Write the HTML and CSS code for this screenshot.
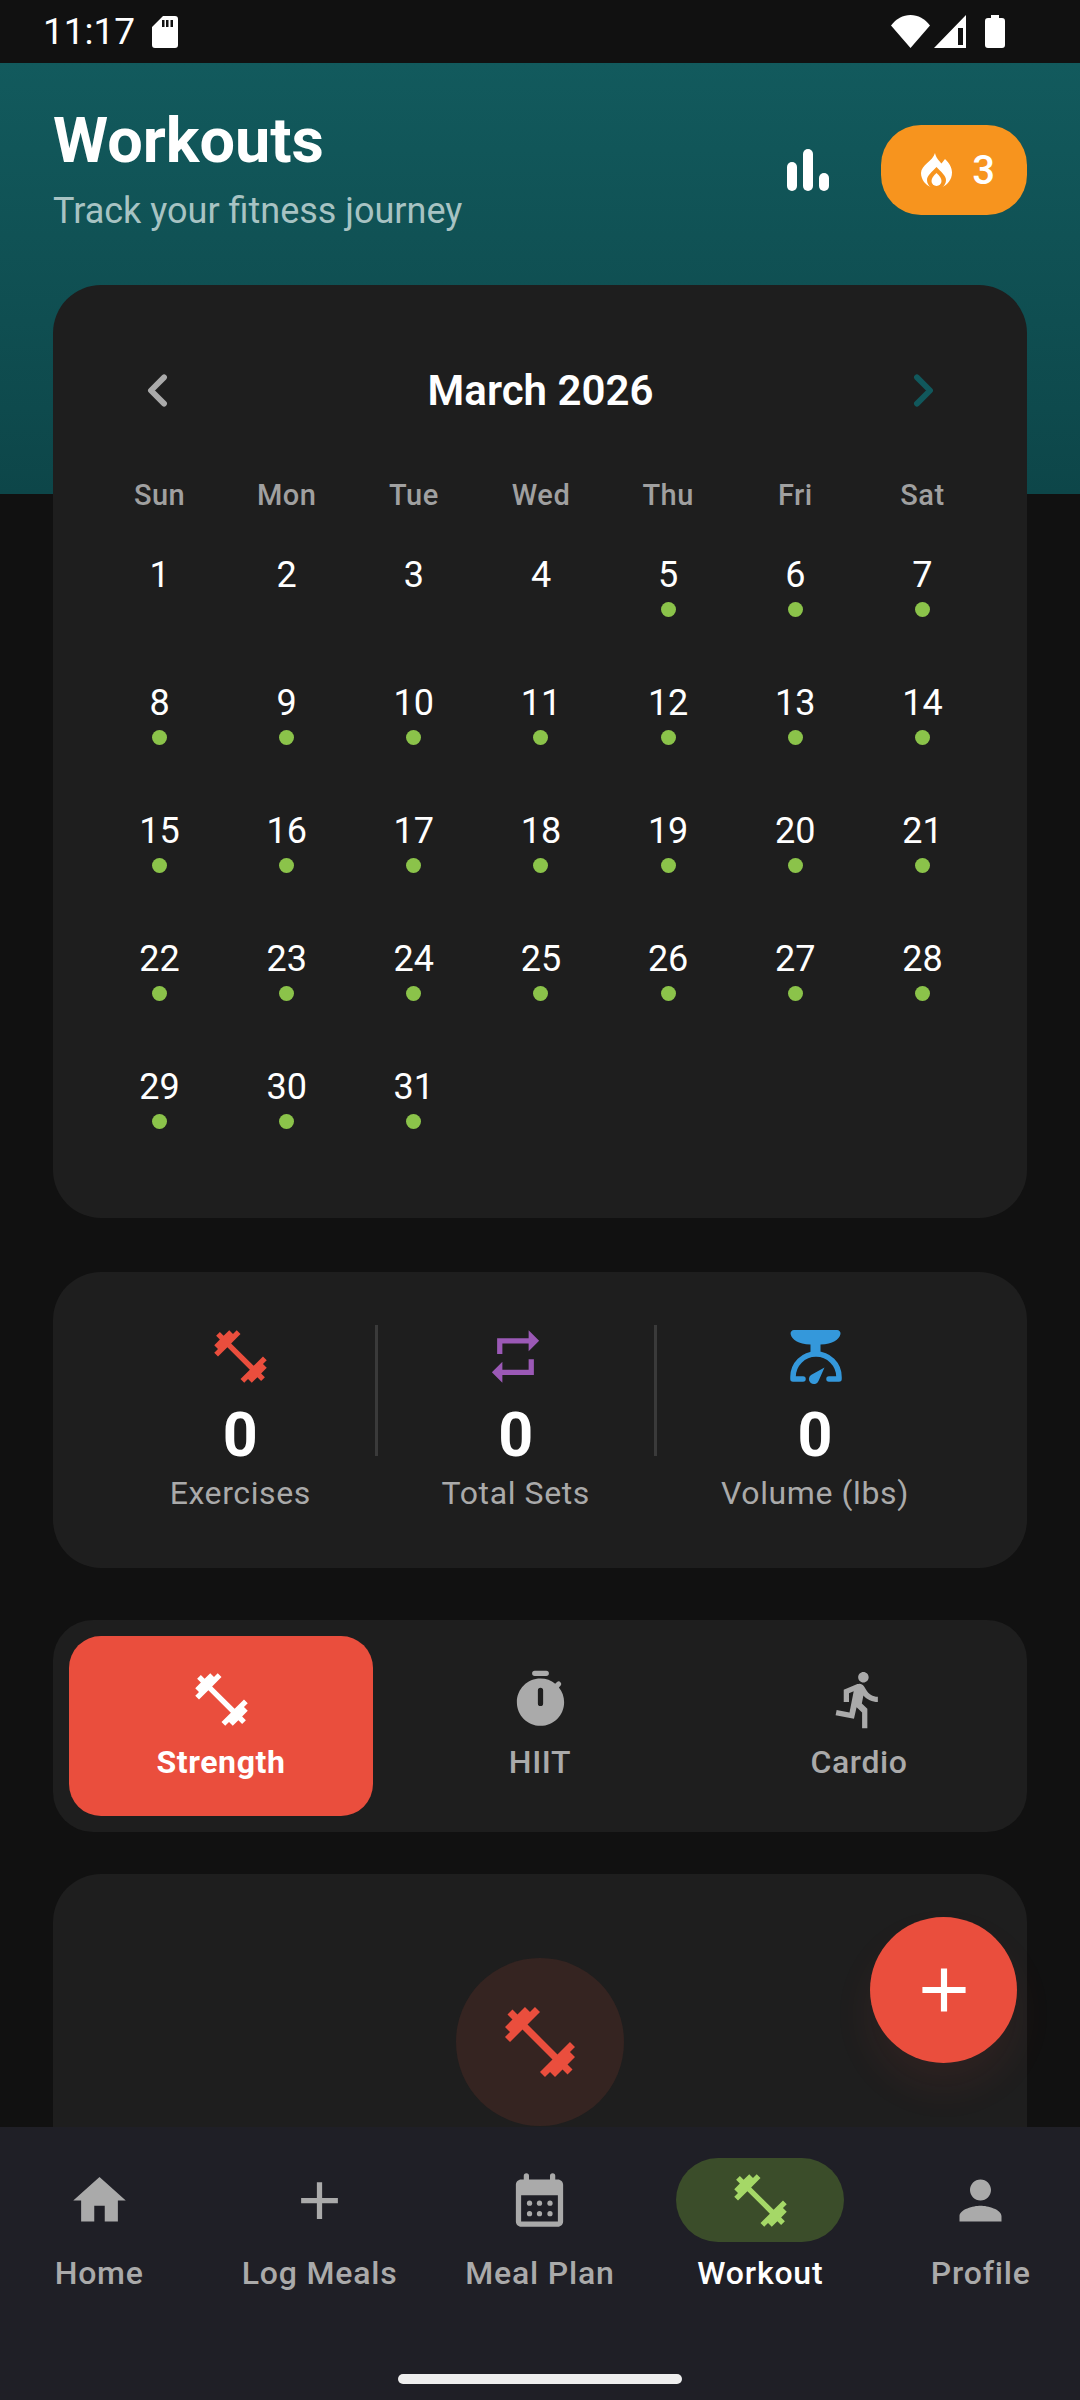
FILE: index.html
```html
<!DOCTYPE html>
<html lang="en">
<head>
  <meta charset="UTF-8">
  <meta name="viewport" content="width=device-width, initial-scale=1.0">
  <title>Workouts</title>
  <link rel="stylesheet" href="styles.css">
</head>
<body>
<div class="app">
  <div class="status-bar">
    <div class="status-left">
      <span class="clock">11:17</span>
      <svg class="sd-icon" viewBox="0 0 26 32"><path fill="#fff" fill-rule="evenodd" d="M11 0h12a3 3 0 0 1 3 3v26a3 3 0 0 1-3 3H3a3 3 0 0 1-3-3V11zM14 4v7h2.5V4zm4.5 0v7H21V4zM10 4v7h2.5V4z"/></svg>
    </div>
    <div class="status-right">
      <svg class="wifi-icon" viewBox="0 0 39 33"><path fill="#fff" d="M0 10.500C5 4 12 0 19.500 0S34 4 39 10.500L19.500 33z"/></svg>
      <svg class="signal-icon" viewBox="0 0 32 33"><path fill="#fff" fill-rule="evenodd" d="M32 0v33H0zM24 13v17h5V13z"/></svg>
      <svg class="battery-icon" viewBox="0 0 20 33"><path fill="#fff" d="M6 0h8v3h3a3 3 0 0 1 3 3v24a3 3 0 0 1-3 3H3a3 3 0 0 1-3-3V6a3 3 0 0 1 3-3h3z"/></svg>
    </div>
  </div>

  <div class="main">
    <header class="top">
      <div>
        <h1>Workouts</h1>
        <p class="subtitle">Track your fitness journey</p>
      </div>
      <div class="top-actions">
        <div class="bars"><span class="bar-a"></span><span class="bar-b"></span><span class="bar-c"></span></div>
        <div class="streak">
          <svg class="flame" viewBox="0 0 31 34">
            <path fill="#fff" d="M14 0c1 5 4 7.500 6.500 10.500L24 6c4 3.500 7 8.500 7 13.500C31 27 26 32 21.500 34c2-1.500 3.500-4 3.500-7 0-4.500-5-8-9.500-13-4.500 5-9.500 8.500-9.500 13 0 3 1.500 5.500 3.500 7C5 32 0 27 0 20 0 12 12 8 14 0z"/>
            <path fill="#fff" d="M15.500 20c3 3 5 5 5 8a5 5 0 0 1-10 0c0-3 2-5 5-8z"/>
          </svg>
          <span>3</span>
        </div>
      </div>
    </header>

    <section class="card calendar">
      <div class="cal-head">
        <svg class="icon" viewBox="0 0 24 24"><path class="chev chev-prev" d="M14.500 7l-5 5 5 5"/></svg>
        <h2>March 2026</h2>
        <svg class="icon" viewBox="0 0 24 24"><path class="chev chev-next" d="M9.500 7l5 5-5 5"/></svg>
      </div>
      <div class="weekdays">
        <span>Sun</span><span>Mon</span><span>Tue</span><span>Wed</span><span>Thu</span><span>Fri</span><span>Sat</span>
      </div>
      <div class="days">
        <div class="day">1</div>
        <div class="day">2</div>
        <div class="day">3</div>
        <div class="day">4</div>
        <div class="day done">5</div>
        <div class="day done">6</div>
        <div class="day done">7</div>
        <div class="day done">8</div>
        <div class="day done">9</div>
        <div class="day done">10</div>
        <div class="day done">11</div>
        <div class="day done">12</div>
        <div class="day done">13</div>
        <div class="day done">14</div>
        <div class="day done">15</div>
        <div class="day done">16</div>
        <div class="day done">17</div>
        <div class="day done">18</div>
        <div class="day done">19</div>
        <div class="day done">20</div>
        <div class="day done">21</div>
        <div class="day done">22</div>
        <div class="day done">23</div>
        <div class="day done">24</div>
        <div class="day done">25</div>
        <div class="day done">26</div>
        <div class="day done">27</div>
        <div class="day done">28</div>
        <div class="day done">29</div>
        <div class="day done">30</div>
        <div class="day done">31</div>
      </div>
    </section>

    <section class="card stats">
      <div class="stat stat-exercises">
        <svg class="icon red" viewBox="0 0 24 24"><path d="M20.570 14.860L22 13.430 20.570 12 17 15.570 8.430 7 12 3.430 10.570 2 9.140 3.430 7.710 2 5.570 4.140 4.140 2.710 2.710 4.140l1.430 1.430L2 7.710l1.430 1.430L2 10.570 3.430 12 7 8.430 15.570 17 12 20.570 13.430 22l1.430-1.430L16.290 22l2.140-2.140 1.430 1.430 1.430-1.430-1.430-1.430L22 16.290z"/></svg>
        <div class="stat-value">0</div>
        <div class="stat-label">Exercises</div>
      </div>
      <div class="divider"></div>
      <div class="stat stat-sets">
        <svg class="icon purple" viewBox="0 0 24 24"><path d="M7 7h10v3l4-4-4-4v3H5v6h2V7zm10 10H7v-3l-4 4 4 4v-3h12v-6h-2v4z"/></svg>
        <div class="stat-value">0</div>
        <div class="stat-label">Total Sets</div>
      </div>
      <div class="divider"></div>
      <div class="stat stat-volume">
        <svg class="icon blue" viewBox="14 5 63 63">
          <path d="M24 10h43a3.500 3.500 0 0 1 3.500 4c-1.500 6-7.500 10-20 10.500V35h-10V24.500C28 24 22 20 20.600 14a3.500 3.500 0 0 1 3.400-4z"/>
          <path class="scale-arc" d="M33 59H23v-2a22.500 22.500 0 0 1 46 0v2H59"/>
          <path d="M54.500 47.500L41 55a5 5 0 1 0 7.500 6z"/>
        </svg>
        <div class="stat-value">0</div>
        <div class="stat-label">Volume (lbs)</div>
      </div>
    </section>

    <section class="card tabs">
      <div class="tab active">
        <svg class="icon" viewBox="0 0 24 24"><path d="M20.570 14.860L22 13.430 20.570 12 17 15.570 8.430 7 12 3.430 10.570 2 9.140 3.430 7.710 2 5.570 4.140 4.140 2.710 2.710 4.140l1.430 1.430L2 7.710l1.430 1.430L2 10.570 3.430 12 7 8.430 15.570 17 12 20.570 13.430 22l1.430-1.430L16.290 22l2.140-2.140 1.430 1.430 1.430-1.430-1.430-1.430L22 16.290z"/></svg>
        <span>Strength</span>
      </div>
      <div class="tab">
        <svg class="icon" viewBox="0 0 24 24"><path fill-rule="evenodd" d="M9.800 1h4.400a1 1 0 0 1 0 2H9.800a1 1 0 0 1 0-2zM12 4c2.100 0 4.100.7 5.600 2l.7-.7a1 1 0 0 1 1.400 1.400l-.7.700c1.300 1.500 2 3.500 2 5.600 0 5-4 9-9 9s-9-4-9-9 4-9 9-9zm-1 4.500v5a1 1 0 0 0 2 0v-5a1 1 0 0 0-2 0z"/></svg>
        <span>HIIT</span>
      </div>
      <div class="tab">
        <svg class="icon" viewBox="0 0 24 24"><path d="M13.490 5.480c1.100 0 2-.9 2-2s-.9-2-2-2-2 .9-2 2 .9 2 2 2zm-3.600 13.900l1-4.400 2.100 2v6h2v-7.500l-2.100-2 .6-3c1.300 1.500 3.300 2.500 5.500 2.500v-2c-1.900 0-3.500-1-4.300-2.400l-1-1.600c-.4-.6-1-1-1.700-1-.3 0-.5.100-.8.100l-5.200 2.200v4.700h2v-3.400l1.800-.7-1.600 8.100-4.900-1-.4 2 7 1.400z"/></svg>
        <span>Cardio</span>
      </div>
    </section>

    <section class="card empty">
      <div class="empty-badge">
        <svg class="icon red" viewBox="0 0 24 24"><path d="M20.570 14.860L22 13.430 20.570 12 17 15.570 8.430 7 12 3.430 10.570 2 9.140 3.430 7.710 2 5.570 4.140 4.140 2.710 2.710 4.140l1.430 1.430L2 7.710l1.430 1.430L2 10.570 3.430 12 7 8.430 15.570 17 12 20.570 13.430 22l1.430-1.430L16.290 22l2.140-2.140 1.430 1.430 1.430-1.430-1.430-1.430L22 16.290z"/></svg>
      </div>
    </section>

    <button class="fab" aria-label="Add workout">
      <svg class="icon" viewBox="0 0 24 24"><path d="M19 13h-6v6h-2v-6H5v-2h6V5h2v6h6v2z"/></svg>
    </button>
  </div>

  <nav class="bottom-nav">
    <div class="nav-items">
      <div class="nav-item">
        <div class="nav-pill"><svg class="icon" viewBox="0 0 24 24"><path d="M10 20v-6h4v6h5v-8h3L12 3 2 12h3v8z"/></svg></div>
        <span>Home</span>
      </div>
      <div class="nav-item">
        <div class="nav-pill"><svg class="icon" viewBox="0 0 24 24"><path d="M19 13h-6v6h-2v-6H5v-2h6V5h2v6h6v2z"/></svg></div>
        <span>Log Meals</span>
      </div>
      <div class="nav-item">
        <div class="nav-pill"><svg class="icon" viewBox="0 0 24 24"><path fill-rule="evenodd" d="M7 1.600a1 1 0 0 1 1 1V4h8V2.600a1 1 0 0 1 2 0V4h1c1.100 0 2 .9 2 2v14c0 1.100-.9 2-2 2H5c-1.100 0-2-.9-2-2V6c0-1.100.9-2 2-2h1V2.600a1 1 0 0 1 1-1zM5 10v10h14V10z"/><circle cx="8.200" cy="13" r="1"/><circle cx="12" cy="13" r="1"/><circle cx="16" cy="13" r="1"/><circle cx="8.200" cy="17" r="1"/><circle cx="12" cy="17" r="1"/><circle cx="16" cy="17" r="1"/></svg></div>
        <span>Meal Plan</span>
      </div>
      <div class="nav-item active">
        <div class="nav-pill"><svg class="icon" viewBox="0 0 24 24"><path d="M20.570 14.860L22 13.430 20.570 12 17 15.570 8.430 7 12 3.430 10.570 2 9.140 3.430 7.710 2 5.570 4.140 4.140 2.710 2.710 4.140l1.430 1.430L2 7.710l1.430 1.430L2 10.570 3.430 12 7 8.430 15.570 17 12 20.570 13.430 22l1.430-1.430L16.290 22l2.140-2.140 1.430 1.430 1.430-1.430-1.430-1.430L22 16.290z"/></svg></div>
        <span>Workout</span>
      </div>
      <div class="nav-item">
        <div class="nav-pill"><svg class="icon" viewBox="0 0 24 24"><path d="M12 12c2.210 0 4-1.790 4-4s-1.790-4-4-4-4 1.790-4 4 1.790 4 4 4zm0 2c-2.670 0-8 1.340-8 4v2h16v-2c0-2.660-5.330-4-8-4z"/></svg></div>
        <span>Profile</span>
      </div>
    </div>
    <div class="home-indicator"></div>
  </nav>
</div>
</body>
</html>
```

FILE: styles.css
```css
* {
  box-sizing: border-box;
}
html, body {
  margin: 0;
  padding: 0;
}
body {
  font-family: 'Roboto', 'Liberation Sans', sans-serif;
  background-color: #111;
  color: #fff;
}
.app {
  width: 1080px;
  height: 2400px;
  display: flex;
  flex-direction: column;
  overflow: hidden;
}
.icon {
  display: block;
  width: 63px;
  height: 63px;
  fill: currentColor;
}
.red { color: #ea4e3d; }
.purple { color: #9b59b6; }
.blue { color: #3498db; }

/* status bar */
.status-bar {
  height: 63px;
  flex: none;
  display: flex;
  justify-content: space-between;
  align-items: center;
  padding: 0 75px 0 43px;
  background-color: #111;
}
.status-left, .status-right {
  display: flex;
  align-items: center;
}
.clock {
  font-size: 37px;
  line-height: 63px;
}
.sd-icon {
  width: 26px;
  height: 32px;
  margin-left: 17px;
}
.wifi-icon {
  width: 39px;
  height: 33px;
}
.signal-icon {
  width: 32px;
  height: 33px;
  margin-left: 4px;
}
.battery-icon {
  width: 20px;
  height: 33px;
  margin-left: 19px;
}

/* main column */
.main {
  position: relative;
  flex: 1;
  min-height: 0;
  overflow: hidden;
  padding: 0 53px;
  background: linear-gradient(#125a5d, #0d4649) no-repeat;
  background-size: 100% 431px;
}
.top {
  display: flex;
  justify-content: space-between;
  align-items: center;
  padding-top: 46px;
}
h1 {
  margin: 0;
  font-size: 63px;
  line-height: 64px;
  font-weight: 700;
}
.subtitle {
  margin: 16px 0 0;
  font-size: 36px;
  line-height: 44px;
  color: #a8c3c3;
}
.top-actions {
  display: flex;
  align-items: center;
  margin-bottom: 2px;
}
.bars {
  display: flex;
  align-items: flex-end;
  gap: 6px;
  height: 42px;
  margin-right: 52px;
}
.bars span {
  width: 10px;
  background-color: #fff;
  border-radius: 5px;
}
.bars .bar-a { height: 29px; }
.bars .bar-b { height: 42px; }
.bars .bar-c { height: 18px; }
.streak {
  width: 146px;
  height: 90px;
  padding-left: 8px;
  border-radius: 40px;
  background-color: #f7941e;
  display: flex;
  align-items: center;
  justify-content: center;
  gap: 20px;
  font-size: 40px;
  font-weight: 500;
}
.flame {
  width: 31px;
  height: 34px;
}

/* cards */
.card {
  background-color: #1e1e1e;
  border-radius: 48px;
}

/* calendar */
.calendar {
  margin-top: 52px;
  padding: 74px 41px 25px 43px;
}
.cal-head {
  display: flex;
  justify-content: space-between;
  align-items: center;
  padding: 0 31px 0 30px;
}
h2 {
  margin: 0;
  font-size: 42px;
  line-height: 63px;
  font-weight: 600;
}
.chev {
  fill: none;
  stroke-width: 2.200;
  stroke-linecap: round;
  stroke-linejoin: round;
}
.chev-prev { stroke: #aaa; }
.chev-next { stroke: #11585c; }
.weekdays {
  display: grid;
  grid-template-columns: repeat(7, 1fr);
  margin-top: 53px;
  font-size: 29px;
  line-height: 40px;
  font-weight: 500;
  letter-spacing: 0.5px;
  color: #a0a0a0;
  text-align: center;
}
.days {
  display: grid;
  grid-template-columns: repeat(7, 1fr);
  grid-auto-rows: 128px;
  margin-top: 38px;
}
.day {
  text-align: center;
  font-size: 36px;
  line-height: 44px;
}
.day.done::after {
  content: "";
  display: block;
  width: 15px;
  height: 15px;
  margin: 5px auto 0;
  border-radius: 50%;
  background-color: #8bc34a;
}

/* stats */
.stats {
  margin-top: 54px;
  padding: 53px 0 55px;
  display: flex;
  align-items: flex-start;
}
.stat {
  display: flex;
  flex-direction: column;
  align-items: center;
}
.stat-exercises { width: 321.5px; padding-left: 53px; }
.stat-sets { width: 276.5px; }
.stat-volume { width: 316px; }
.stat-value {
  margin-top: 11px;
  font-size: 61px;
  line-height: 72px;
  font-weight: 700;
}
.stat-label {
  margin-top: 2px;
  font-size: 32px;
  line-height: 40px;
  letter-spacing: 0.6px;
  color: #aaa;
}
.divider {
  width: 3px;
  height: 131px;
  background-color: #3a3a3a;
}
.scale-arc {
  fill: none;
  stroke: currentColor;
  stroke-width: 5.500;
  stroke-linecap: round;
  stroke-linejoin: round;
}

/* workout type tabs */
.tabs {
  margin-top: 52px;
  padding: 16px;
  display: grid;
  grid-template-columns: repeat(3, 1fr);
  gap: 15px;
  border-radius: 40px;
}
.tab {
  height: 180px;
  padding-top: 32px;
  border-radius: 32px;
  display: flex;
  flex-direction: column;
  align-items: center;
  font-size: 32px;
  line-height: 40px;
  font-weight: 500;
  letter-spacing: 0.6px;
  color: #aaa;
}
.tab span {
  margin-top: 11px;
}
.tab.active {
  background-color: #ea4e3d;
  color: #fff;
  font-weight: 700;
}

/* empty state */
.empty {
  margin-top: 42px;
  height: 420px;
  padding-top: 84px;
  display: flex;
  justify-content: center;
}
.empty-badge {
  width: 168px;
  height: 168px;
  border-radius: 50%;
  background-color: #352421;
  display: flex;
  align-items: center;
  justify-content: center;
}
.empty-badge .icon {
  width: 84px;
  height: 84px;
}
.fab {
  position: absolute;
  right: 63px;
  bottom: 64px;
  width: 147px;
  height: 146px;
  border: none;
  padding: 0;
  border-radius: 50%;
  background-color: #ea4e3d;
  color: #fff;
  display: flex;
  align-items: center;
  justify-content: center;
  box-shadow: 0 24px 40px rgba(234, 78, 61, 0.08);
}
.fab .icon {
  width: 74px;
  height: 74px;
}

/* bottom navigation */
.bottom-nav {
  height: 273px;
  flex: none;
  background-color: #1f1f26;
  padding-top: 31px;
}
.nav-items {
  display: grid;
  grid-template-columns: repeat(5, 1fr);
  gap: 44px;
  padding: 0 11px;
}
.nav-item {
  display: flex;
  flex-direction: column;
  align-items: center;
  font-size: 32px;
  line-height: 40px;
  font-weight: 500;
  letter-spacing: 0.8px;
  color: #aaa;
}
.nav-pill {
  width: 168px;
  height: 84px;
  border-radius: 42px;
  display: flex;
  align-items: center;
  justify-content: center;
  margin-bottom: 11px;
}
.nav-item.active {
  color: #fff;
}
.nav-item.active .nav-pill {
  background-color: #3b4d2a;
  color: #a5d867;
}
.home-indicator {
  width: 284px;
  height: 10px;
  margin: 81px auto 0;
  border-radius: 5px;
  background-color: #eee;
}
```
